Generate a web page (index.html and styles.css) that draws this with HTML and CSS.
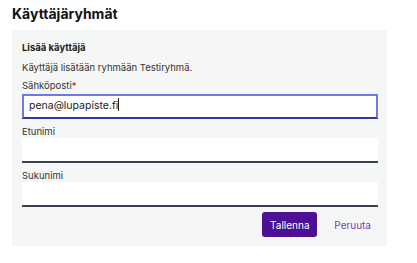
FILE: index.html
```html
<!DOCTYPE html>
<html lang="fi">
<head>
  <meta charset="UTF-8">
  <meta name="viewport" content="width=device-width, initial-scale=1.0">
  <title>Käyttäjäryhmät</title>
  <link rel="stylesheet" href="styles.css">
</head>
<body>
  <h1>Käyttäjäryhmät</h1>

  <div class="panel">
    <h3>Lisää käyttäjä</h3>
    <p class="info">Käyttäjä lisätään ryhmään Testiryhmä.</p>

    <div class="field">
      <label>Sähköposti<span class="req">*</span></label>
      <div class="input focused">pena@lupapiste.fi<span class="caret"></span></div>
    </div>
    <div class="field">
      <label>Etunimi</label>
      <div class="input"></div>
    </div>
    <div class="field">
      <label>Sukunimi</label>
      <div class="input"></div>
    </div>

    <div class="actions">
      <button class="btn-primary">Tallenna</button>
      <a class="link" href="#">Peruuta</a>
    </div>
  </div>
</body>
</html>
```

FILE: styles.css
```css
body {
  font-family: Inter, 'Noto Sans', sans-serif;
  margin: 0;
  padding: 0 30px 0 12px;
  background: #fff;
  color: #1c1c1e;
}
h1 {
  margin: 0;
  padding-top: 5px;
  height: 25px;
  font-size: 14px;
  font-weight: 700;
  color: #111;
  line-height: 18px;
}
.panel {
  background: #f5f6f6;
  padding: 11px 9px 10px 10px;
  width: 356px;
  height: 195px;
}
.panel h3 {
  margin: 0;
  font-size: 9.5px;
  font-weight: 700;
  line-height: 14px;
  color: #222;
}
.info {
  margin: 6px 0 0;
  font-size: 9.5px;
  line-height: 14px;
  color: #333;
}
.field label {
  display: block;
  font-size: 9.5px;
  line-height: 12px;
  margin-top: 5px;
  height: 12px;
  color: #333;
}
.field .req { color: #d0021b; }
.field + .field label { margin-top: 7px; }
.input {
  box-sizing: border-box;
  height: 25px;
  margin-top: 0;
  background: #fff;
  border-bottom: 2px solid #3a4152;
  font-size: 10.5px;
  line-height: 22px;
  padding-left: 6px;
  color: #222;
}
.input.focused {
  border: 2px solid #6b7ae6;
  border-bottom-color: #2c3c9c;
  margin-top: 2px;
  padding-left: 5px;
  line-height: 20px;
}
.caret {
  display: inline-block;
  width: 1px;
  height: 13px;
  background: #222;
  vertical-align: -2px;
}
.actions {
  display: flex;
  justify-content: flex-end;
  align-items: center;
  gap: 17px;
  margin-top: 5px;
  padding-right: 7px;
}
.btn-primary {
  font-family: inherit;
  font-size: 10px;
  background: #4d0f93;
  color: #fff;
  border: none;
  border-radius: 3px;
  height: 25px;
  width: 55px;
  padding: 0;
}
.link {
  font-size: 10px;
  color: #7b3fb6;
  text-decoration: none;
}
```
